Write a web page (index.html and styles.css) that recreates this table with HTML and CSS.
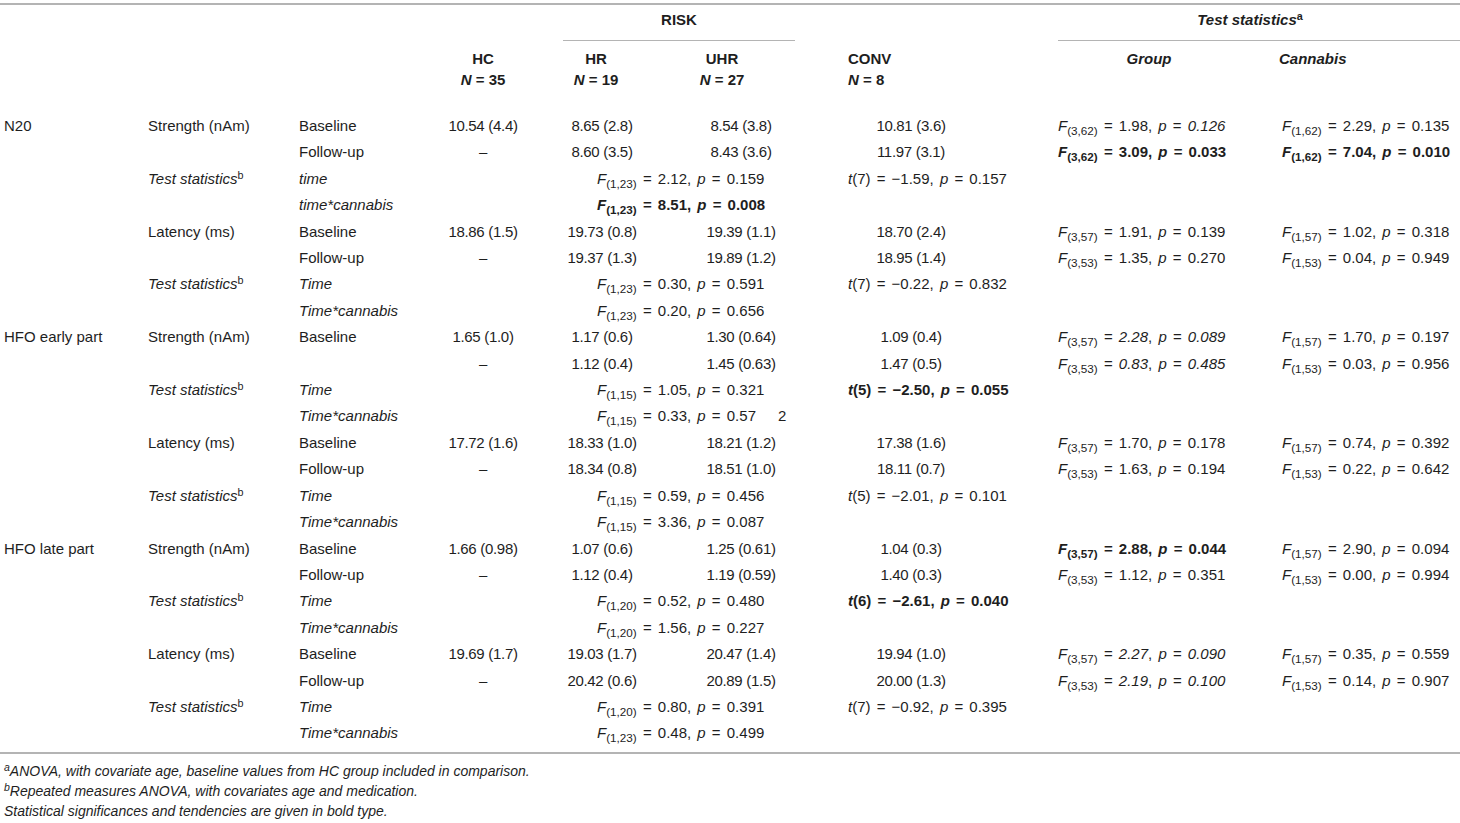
FILE: index.html
```html
<!DOCTYPE html>
<html>
<head>
<meta charset="utf-8">
<link rel="stylesheet" href="styles.css">
</head>
<body>
<table class="tbl">
<colgroup>
<col class="w1"><col class="w2"><col class="w3"><col class="w4"><col class="w5"><col class="w6"><col class="w7"><col class="w8"><col class="w9">
</colgroup>
<thead>
<tr class="h1">
<th></th><th></th><th></th><th></th>
<th colspan="2"><div class="span-risk">RISK</div></th>
<th></th>
<th colspan="2"><div class="span-ts"><i>Test statistics</i><sup>a</sup></div></th>
</tr>
<tr class="h2">
<th></th><th></th><th></th>
<th class="hc">HC</th><th class="hr">HR</th><th class="uhr">UHR</th><th class="conv">CONV</th><th class="grp"><i>Group</i></th><th class="can"><i>Cannabis</i></th>
</tr>
<tr class="h3">
<th></th><th></th><th></th>
<th class="hc"><i>N</i> = 35</th><th class="hr"><i>N</i> = 19</th><th class="uhr"><i>N</i> = 27</th><th class="conv"><i>N</i> = 8</th><th></th><th></th>
</tr>
</thead>
<tbody>
<tr class="first"><td class="c1">N20</td><td class="c2">Strength (nAm)</td><td class="c3">Baseline</td><td class="num">10.54 (4.4)</td><td class="num">8.65 (2.8)</td><td class="num">8.54 (3.8)</td><td class="cnum">10.81 (3.6)</td><td class="g"><i>F</i><sub>(3,62)</sub> = 1.98, <i>p</i> = <i>0.126</i></td><td class="k"><i>F</i><sub>(1,62)</sub> = 2.29, <i>p</i> = 0.135</td></tr>
<tr><td class="c1"></td><td class="c2"></td><td class="c3">Follow-up</td><td class="num">–</td><td class="num">8.60 (3.5)</td><td class="num">8.43 (3.6)</td><td class="cnum">11.97 (3.1)</td><td class="g b"><i>F</i><sub>(3,62)</sub> = 3.09, <i>p</i> = 0.033</td><td class="k b"><i>F</i><sub>(1,62)</sub> = 7.04, <i>p</i> = 0.010</td></tr>
<tr><td class="c1"></td><td class="c2"><i>Test statistics</i><sup>b</sup></td><td class="c3"><i>time</i></td><td></td><td class="m" colspan="2"><i>F</i><sub>(1,23)</sub> = 2.12, <i>p</i> = 0.159</td><td class="t"><i>t</i>(7) = −1.59, <i>p</i> = 0.157</td><td></td><td></td></tr>
<tr><td class="c1"></td><td class="c2"></td><td class="c3"><i>time*cannabis</i></td><td></td><td class="m b" colspan="2"><i>F</i><sub>(1,23)</sub> = 8.51, <i>p</i> = 0.008</td><td></td><td></td><td></td></tr>
<tr><td class="c1"></td><td class="c2">Latency (ms)</td><td class="c3">Baseline</td><td class="num">18.86 (1.5)</td><td class="num">19.73 (0.8)</td><td class="num">19.39 (1.1)</td><td class="cnum">18.70 (2.4)</td><td class="g"><i>F</i><sub>(3,57)</sub> = 1.91, <i>p</i> = 0.139</td><td class="k"><i>F</i><sub>(1,57)</sub> = 1.02, <i>p</i> = 0.318</td></tr>
<tr><td class="c1"></td><td class="c2"></td><td class="c3">Follow-up</td><td class="num">–</td><td class="num">19.37 (1.3)</td><td class="num">19.89 (1.2)</td><td class="cnum">18.95 (1.4)</td><td class="g"><i>F</i><sub>(3,53)</sub> = 1.35, <i>p</i> = 0.270</td><td class="k"><i>F</i><sub>(1,53)</sub> = 0.04, <i>p</i> = 0.949</td></tr>
<tr><td class="c1"></td><td class="c2"><i>Test statistics</i><sup>b</sup></td><td class="c3"><i>Time</i></td><td></td><td class="m" colspan="2"><i>F</i><sub>(1,23)</sub> = 0.30, <i>p</i> = 0.591</td><td class="t"><i>t</i>(7) = −0.22, <i>p</i> = 0.832</td><td></td><td></td></tr>
<tr><td class="c1"></td><td class="c2"></td><td class="c3"><i>Time*cannabis</i></td><td></td><td class="m" colspan="2"><i>F</i><sub>(1,23)</sub> = 0.20, <i>p</i> = 0.656</td><td></td><td></td><td></td></tr>

<tr><td class="c1">HFO early part</td><td class="c2">Strength (nAm)</td><td class="c3">Baseline</td><td class="num">1.65 (1.0)</td><td class="num">1.17 (0.6)</td><td class="num">1.30 (0.64)</td><td class="cnum">1.09 (0.4)</td><td class="g"><i>F</i><sub>(3,57)</sub> = <i>2.28</i>, <i>p</i> = <i>0.089</i></td><td class="k"><i>F</i><sub>(1,57)</sub> = 1.70, <i>p</i> = 0.197</td></tr>
<tr><td class="c1"></td><td class="c2"></td><td class="c3"></td><td class="num">–</td><td class="num">1.12 (0.4)</td><td class="num">1.45 (0.63)</td><td class="cnum">1.47 (0.5)</td><td class="g"><i>F</i><sub>(3,53)</sub> = <i>0.83</i>, <i>p</i> = <i>0.485</i></td><td class="k"><i>F</i><sub>(1,53)</sub> = 0.03, <i>p</i> = 0.956</td></tr>
<tr><td class="c1"></td><td class="c2"><i>Test statistics</i><sup>b</sup></td><td class="c3"><i>Time</i></td><td></td><td class="m" colspan="2"><i>F</i><sub>(1,15)</sub> = 1.05, <i>p</i> = 0.321</td><td class="t b"><i>t</i>(5) = −2.50, <i>p</i> = 0.055</td><td></td><td></td></tr>
<tr><td class="c1"></td><td class="c2"></td><td class="c3"><i>Time*cannabis</i></td><td></td><td class="m" colspan="2"><i>F</i><sub>(1,15)</sub> = 0.33, <i>p</i> = 0.57<span class="gap">2</span></td><td></td><td></td><td></td></tr>
<tr><td class="c1"></td><td class="c2">Latency (ms)</td><td class="c3">Baseline</td><td class="num">17.72 (1.6)</td><td class="num">18.33 (1.0)</td><td class="num">18.21 (1.2)</td><td class="cnum">17.38 (1.6)</td><td class="g"><i>F</i><sub>(3,57)</sub> = 1.70, <i>p</i> = 0.178</td><td class="k"><i>F</i><sub>(1,57)</sub> = 0.74, <i>p</i> = 0.392</td></tr>
<tr><td class="c1"></td><td class="c2"></td><td class="c3">Follow-up</td><td class="num">–</td><td class="num">18.34 (0.8)</td><td class="num">18.51 (1.0)</td><td class="cnum">18.11 (0.7)</td><td class="g"><i>F</i><sub>(3,53)</sub> = 1.63, <i>p</i> = 0.194</td><td class="k"><i>F</i><sub>(1,53)</sub> = 0.22, <i>p</i> = 0.642</td></tr>
<tr><td class="c1"></td><td class="c2"><i>Test statistics</i><sup>b</sup></td><td class="c3"><i>Time</i></td><td></td><td class="m" colspan="2"><i>F</i><sub>(1,15)</sub> = 0.59, <i>p</i> = 0.456</td><td class="t"><i>t</i>(5) = −2.01, <i>p</i> = 0.101</td><td></td><td></td></tr>
<tr><td class="c1"></td><td class="c2"></td><td class="c3"><i>Time*cannabis</i></td><td></td><td class="m" colspan="2"><i>F</i><sub>(1,15)</sub> = 3.36, <i>p</i> = 0.087</td><td></td><td></td><td></td></tr>

<tr><td class="c1">HFO late part</td><td class="c2">Strength (nAm)</td><td class="c3">Baseline</td><td class="num">1.66 (0.98)</td><td class="num">1.07 (0.6)</td><td class="num">1.25 (0.61)</td><td class="cnum">1.04 (0.3)</td><td class="g b"><i>F</i><sub>(3,57)</sub> = 2.88, <i>p</i> = 0.044</td><td class="k"><i>F</i><sub>(1,57)</sub> = 2.90, <i>p</i> = 0.094</td></tr>
<tr><td class="c1"></td><td class="c2"></td><td class="c3">Follow-up</td><td class="num">–</td><td class="num">1.12 (0.4)</td><td class="num">1.19 (0.59)</td><td class="cnum">1.40 (0.3)</td><td class="g"><i>F</i><sub>(3,53)</sub> = 1.12, <i>p</i> = 0.351</td><td class="k"><i>F</i><sub>(1,53)</sub> = 0.00, <i>p</i> = 0.994</td></tr>
<tr><td class="c1"></td><td class="c2"><i>Test statistics</i><sup>b</sup></td><td class="c3"><i>Time</i></td><td></td><td class="m" colspan="2"><i>F</i><sub>(1,20)</sub> = 0.52, <i>p</i> = 0.480</td><td class="t b"><i>t</i>(6) = −2.61, <i>p</i> = 0.040</td><td></td><td></td></tr>
<tr><td class="c1"></td><td class="c2"></td><td class="c3"><i>Time*cannabis</i></td><td></td><td class="m" colspan="2"><i>F</i><sub>(1,20)</sub> = 1.56, <i>p</i> = 0.227</td><td></td><td></td><td></td></tr>
<tr><td class="c1"></td><td class="c2">Latency (ms)</td><td class="c3">Baseline</td><td class="num">19.69 (1.7)</td><td class="num">19.03 (1.7)</td><td class="num">20.47 (1.4)</td><td class="cnum">19.94 (1.0)</td><td class="g"><i>F</i><sub>(3,57)</sub> = <i>2.27</i>, <i>p</i> = <i>0.090</i></td><td class="k"><i>F</i><sub>(1,57)</sub> = 0.35, <i>p</i> = 0.559</td></tr>
<tr><td class="c1"></td><td class="c2"></td><td class="c3">Follow-up</td><td class="num">–</td><td class="num">20.42 (0.6)</td><td class="num">20.89 (1.5)</td><td class="cnum">20.00 (1.3)</td><td class="g"><i>F</i><sub>(3,53)</sub> = <i>2.19</i>, <i>p</i> = <i>0.100</i></td><td class="k"><i>F</i><sub>(1,53)</sub> = 0.14, <i>p</i> = 0.907</td></tr>
<tr><td class="c1"></td><td class="c2"><i>Test statistics</i><sup>b</sup></td><td class="c3"><i>Time</i></td><td></td><td class="m" colspan="2"><i>F</i><sub>(1,20)</sub> = 0.80, <i>p</i> = 0.391</td><td class="t"><i>t</i>(7) = −0.92, <i>p</i> = 0.395</td><td></td><td></td></tr>
<tr class="last"><td class="c1"></td><td class="c2"></td><td class="c3"><i>Time*cannabis</i></td><td></td><td class="m" colspan="2"><i>F</i><sub>(1,23)</sub> = 0.48, <i>p</i> = 0.499</td><td></td><td></td><td></td></tr>
</tbody>
</table>
<div class="notes">
<p><sup>a</sup>ANOVA, with covariate age, baseline values from HC group included in comparison.</p>
<p><sup>b</sup>Repeated measures ANOVA, with covariates age and medication.</p>
<p>Statistical significances and tendencies are given in bold type.</p>
</div>
</body>
</html>
```
FILE: styles.css
```css
html, body {
  margin: 0;
  padding: 0;
  background: #ffffff;
}
body {
  font-family: "Liberation Sans", Arial, sans-serif;
  color: #1e1e1e;
  font-size: 15px;
}
.tbl {
  table-layout: fixed;
  border-collapse: collapse;
  width: 1460px;
  margin-top: 3px;
  border-top: 2px solid #b4b4b4;
  border-bottom: 2px solid #b4b4b4;
}
.w1 { width: 148px; }
.w2 { width: 151px; }
.w3 { width: 121px; }
.w4 { width: 126px; }
.w5 { width: 112px; }
.w6 { width: 166px; }
.w7 { width: 234px; }
.w8 { width: 182px; }
.w9 { width: 220px; }

th, td {
  padding: 0;
  white-space: nowrap;
  overflow: visible;
  text-align: left;
  font-weight: normal;
}
thead th {
  font-weight: bold;
  line-height: 21px;
  vertical-align: bottom;
}
.h1 th { height: 36px; }
.h1 th div {
  line-height: 20px;
  padding-bottom: 10px;
  border-bottom: 1px solid #b4b4b4;
}
.span-risk {
  margin: 0 29px 0 17px;
  text-align: center;
}
.span-ts {
  text-align: center;
  padding-right: 18px;
}
.h2 th { height: 28px; }
.h3 th { height: 21px; padding-bottom: 6px; }
th.hc { text-align: center; }
th.hr { text-align: center; padding-right: 12px; }
th.uhr { text-align: center; padding-right: 38px; }
th.conv { padding-left: 24px; }
th.grp { text-align: center; }
th.can { padding-left: 39px; }

tbody td {
  height: 26.4px;
  line-height: 26.4px;
  vertical-align: middle;
}
tbody tr.first td { padding-top: 17px; }
tbody tr.last td { padding-bottom: 5px; }
.c1 { padding-left: 4px; }
.num { text-align: center; letter-spacing: -0.3px; }
.cnum { text-align: center; padding-right: 60px; letter-spacing: -0.3px; }
.m, .t, .g, .k { word-spacing: 2px; }
.m { padding-left: 51px; }
.t { padding-left: 24px; }
.k { padding-left: 42px; }
.b { font-weight: bold; }
sub {
  font-size: 0.78em;
  vertical-align: -0.35em;
  line-height: 0;
  word-spacing: 0;
}
sup {
  font-size: 0.72em;
  vertical-align: 0.45em;
  line-height: 0;
}
.gap { padding-left: 22px; }

.notes {
  margin-top: 7px;
  padding-left: 4px;
  font-style: italic;
  font-size: 14px;
}
.notes p {
  margin: 0;
  line-height: 20px;
}
.notes sup { font-size: 0.75em; }
```
